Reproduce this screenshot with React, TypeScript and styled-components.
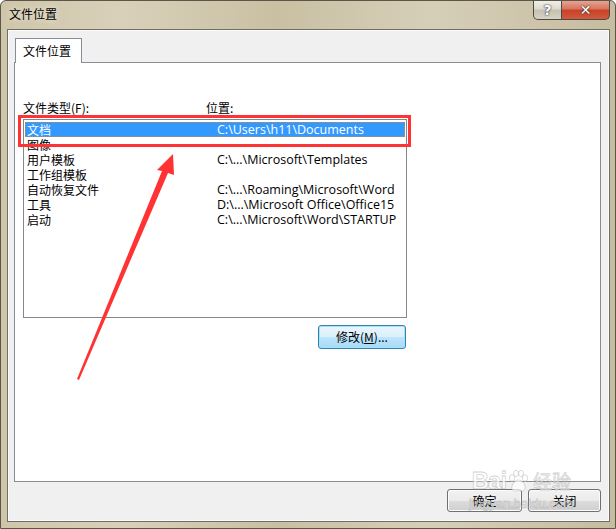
import React from "react";
import styled, { createGlobalStyle } from "styled-components";

const Global = createGlobalStyle`
  html, body { margin: 0; padding: 0; background: #fff; }
  body { font-family: "Noto Sans CJK SC", "Liberation Sans", sans-serif; font-size: 12px; color: #000; }
`;

const Frame = styled.div`
  position: relative;
  width: 616px;
  height: 529px;
  box-sizing: border-box;
  border: 1px solid #5b5647;
  border-radius: 6px 6px 0 0;
  background: linear-gradient(90deg, #cfc6aa 0%, #d8d0b9 20%, #c9c0a3 45%, #d6cfb8 70%, #c6bca0 100%);
  display: flex;
  flex-direction: column;
  padding: 0 5px 6px 6px;
  overflow: hidden;
`;

const TitleBar = styled.div`
  height: 28px;
  display: flex;
  align-items: flex-start;
  justify-content: space-between;
`;

const Title = styled.div`
  font-size: 12px;
  line-height: 26px;
  padding-left: 2px;
  color: #000;
  text-shadow: 0 0 6px rgba(255, 255, 255, 0.8);
`;

const CaptionButtons = styled.div`
  display: flex;
  margin-top: -1px;
`;

const CapButton = styled.div<{ $close?: boolean }>`
  width: ${(p) => (p.$close ? 48 : 29)}px;
  height: 20px;
  box-sizing: border-box;
  border: 1px solid #4b4a45;
  border-top: none;
  border-left: ${(p) => (p.$close ? "none" : "1px solid #4b4a45")};
  border-radius: ${(p) => (p.$close ? "0 0 5px 0" : "0 0 0 5px")};
  background: ${(p) =>
    p.$close
      ? "linear-gradient(180deg, #e9a99b 0%, #d9775f 45%, #c7432a 55%, #d25a3e 100%)"
      : "linear-gradient(180deg, #f2f1ec 0%, #dedbd1 45%, #c6c1b3 55%, #d7d3c6 100%)"};
  display: flex;
  align-items: center;
  justify-content: center;
  color: #fff;
  font-family: "DejaVu Sans", sans-serif;
  font-weight: bold;
  font-size: 14px;
  text-shadow: 0 0 2px #333, 0 0 1px #222;
`;

const Client = styled.div`
  flex: 1;
  background: #f0f0f0;
  border: 1px solid #6e6d68;
  box-shadow: inset 0 0 0 1px #fbfbfa;
  display: flex;
  flex-direction: column;
  padding: 8px 8px 0 6px;
`;

const TabStrip = styled.div`
  display: flex;
  height: 24px;
`;

const Tab = styled.div`
  width: 67px;
  height: 25px;
  box-sizing: border-box;
  background: #fff;
  border: 1px solid #898c95;
  border-bottom: none;
  margin-left: 1px;
  padding-left: 7px;
  line-height: 23px;
  position: relative;
  z-index: 1;
`;

const Panel = styled.div`
  width: 587px;
  height: 420px;
  box-sizing: border-box;
  background: #fff;
  border: 1px solid #898c95;
  padding: 37px 0 0 8px;
  display: flex;
  flex-direction: column;
`;

const LabelRow = styled.div`
  display: grid;
  grid-template-columns: 183px 1fr;
  height: 15px;
  line-height: 15px;
  margin-bottom: 4px;
`;

const ListBox = styled.div`
  width: 384px;
  height: 199px;
  box-sizing: border-box;
  border: 1px solid #828790;
  padding: 2px 1px 1px 1px;
  background: #fff;
`;

const Row = styled.div<{ $selected?: boolean }>`
  display: grid;
  grid-template-columns: 190px 1fr;
  height: 15px;
  line-height: 16px;
  padding-left: 2px;
  box-sizing: border-box;
  white-space: nowrap;
  color: ${(p) => (p.$selected ? "#fff" : "#000")};
  background: ${(p) => (p.$selected ? "#3399ff" : "transparent")};
  outline: ${(p) => (p.$selected ? "1px dotted #c68a3a" : "none")};
  outline-offset: -1px;
`;

const PathText = styled.span`
  font-family: "Open Sans", "Noto Sans CJK SC", sans-serif;
  font-size: 12.5px;
`;

const ModifyRow = styled.div`
  width: 383px;
  display: flex;
  justify-content: flex-end;
  margin-top: 7px;
`;

const Button = styled.div<{ $focus?: boolean; $w: number }>`
  width: ${(p) => p.$w}px;
  height: ${(p) => (p.$focus ? 24 : 23)}px;
  box-sizing: border-box;
  border: 1px solid ${(p) => (p.$focus ? "#3c7fb1" : "#707070")};
  border-radius: 3px;
  background: ${(p) =>
    p.$focus
      ? "linear-gradient(180deg, #eaf6fd 0%, #d9f0fc 50%, #bee6fd 51%, #a7d9f5 100%)"
      : "linear-gradient(180deg, #f2f2f2 0%, #ebebeb 50%, #dddddd 51%, #cfcfcf 100%)"};
  box-shadow: inset 0 0 0 1px ${(p) => (p.$focus ? "#9ee4fb" : "#fbfbfb")};
  display: flex;
  align-items: center;
  justify-content: center;
  line-height: 1;
`;

const Underline = styled.span`
  text-decoration: underline;
`;

const Footer = styled.div`
  width: 587px;
  display: flex;
  justify-content: flex-end;
  gap: 6px;
  margin-top: 7px;
`;

const Overlay = styled.svg`
  position: absolute;
  left: 0;
  top: 0;
  pointer-events: none;
`;

const Watermark = styled.div`
  position: absolute;
  left: 468px;
  top: 468px;
  pointer-events: none;
  color: rgba(255, 255, 255, 0.7);
  -webkit-text-stroke: 0.8px rgba(140, 140, 140, 0.4);
  display: flex;
  flex-direction: column;
  align-items: center;
`;

const WmLogo = styled.div`
  font-family: "Liberation Sans", sans-serif;
  font-weight: bold;
  font-size: 24px;
  line-height: 22px;
  display: flex;
  align-items: center;
  letter-spacing: -1px;
`;

const WmCn = styled.span`
  font-family: "Noto Sans CJK SC", sans-serif;
  font-weight: normal;
  font-size: 19px;
  margin-left: 3px;
  letter-spacing: 0;
`;

const WmUrl = styled.div`
  font-family: "Liberation Sans", sans-serif;
  font-size: 13px;
  line-height: 14px;
  margin-top: 4px;
`;

const rows: [string, string][] = [
  ["文档", "C:\\Users\\h11\\Documents"],
  ["图像", ""],
  ["用户模板", "C:\\...\\Microsoft\\Templates"],
  ["工作组模板", ""],
  ["自动恢复文件", "C:\\...\\Roaming\\Microsoft\\Word"],
  ["工具", "D:\\...\\Microsoft Office\\Office15"],
  ["启动", "C:\\...\\Microsoft\\Word\\STARTUP"],
];

export default function App() {
  return (
    <>
      <Global />
      <Frame>
        <TitleBar>
          <Title>文件位置</Title>
          <CaptionButtons>
            <CapButton>?</CapButton>
            <CapButton $close>✕</CapButton>
          </CaptionButtons>
        </TitleBar>
        <Client>
          <TabStrip>
            <Tab>文件位置</Tab>
          </TabStrip>
          <Panel>
            <LabelRow>
              <span>文件类型(F):</span>
              <span>位置:</span>
            </LabelRow>
            <ListBox>
              {rows.map(([name, path], i) => (
                <Row key={name} $selected={i === 0}>
                  <span>{name}</span>
                  <PathText>{path}</PathText>
                </Row>
              ))}
            </ListBox>
            <ModifyRow>
              <Button $focus $w={88}>
                修改(<Underline>M</Underline>)...
              </Button>
            </ModifyRow>
          </Panel>
          <Footer>
            <Button $w={75}>确定</Button>
            <Button $w={73}>关闭</Button>
          </Footer>
        </Client>
        <Watermark>
          <WmLogo>
            Bai
            <svg width="24" height="24" viewBox="0 0 24 24">
              <g fill="rgba(255,255,255,0.7)" stroke="rgba(140,140,140,0.4)" strokeWidth="0.8">
                <ellipse cx="6" cy="9" rx="2.6" ry="3.4" />
                <ellipse cx="10" cy="4.5" rx="2.4" ry="3.2" />
                <ellipse cx="15" cy="4.5" rx="2.4" ry="3.2" />
                <ellipse cx="19" cy="9" rx="2.6" ry="3.4" />
                <path d="M12.5 11 C8 11 5 17 6 20 C7 23 10 22 12.5 21.5 C15 22 18 23 19 20 C20 17 17 11 12.5 11 Z" />
              </g>
            </svg>
            <WmCn>经验</WmCn>
          </WmLogo>
          <WmUrl>jingyan.baidu.com</WmUrl>
        </Watermark>
        <Overlay width="616" height="529" viewBox="0 0 616 529">
          <rect x="18.5" y="115.5" width="390" height="29" fill="none" stroke="#ff3333" strokeWidth="3" />
          <polygon
            points="172,153 173,174 167,172 78,379 76,378 161,170 156,169"
            fill="#ff3333"
          />
        </Overlay>
      </Frame>
    </>
  );
}
